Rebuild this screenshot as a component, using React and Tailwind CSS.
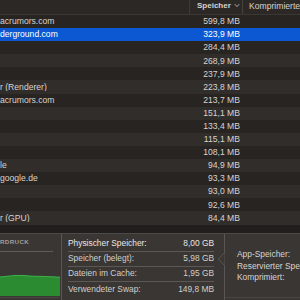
import React from "react";

const rows = [
  { name: "acrumors.com", mem: "599,8 MB" },
  { name: "derground.com", mem: "323,9 MB", selected: true },
  { name: "", mem: "284,4 MB" },
  { name: "", mem: "268,9 MB" },
  { name: "", mem: "237,9 MB" },
  { name: "r (Renderer)", mem: "223,8 MB" },
  { name: "acrumors.com", mem: "213,7 MB" },
  { name: "", mem: "151,1 MB" },
  { name: "", mem: "133,4 MB" },
  { name: "", mem: "115,1 MB" },
  { name: "", mem: "108,1 MB" },
  { name: "le", mem: "94,9 MB" },
  { name: "google.de", mem: "93,3 MB" },
  { name: "", mem: "93,0 MB" },
  { name: "", mem: "92,6 MB" },
  { name: "r (GPU)", mem: "84,4 MB" },
];

const stats = [
  { label: "Physischer Speicher:", value: "8,00 GB", bright: true },
  { label: "Speicher (belegt):", value: "5,98 GB" },
  { label: "Dateien im Cache:", value: "1,95 GB" },
  { label: "Verwendeter Swap:", value: "149,8 MB" },
];

const rowClass = (row, i) => {
  if (row.selected) return "bg-[#0b58d2] text-white";
  return i % 2 === 0 ? "bg-[#272422] text-[#d8d4d0]" : "bg-[#302d2b] text-[#d8d4d0]";
};

const App = () => {
  return (
    <div
      className="w-[300px] h-[300px] overflow-hidden bg-[#272422] flex flex-col"
      style={{ fontFamily: '"Liberation Sans", Arial, sans-serif' }}
    >
      {/* table header */}
      <div className="h-[15px] shrink-0 flex bg-[#2b2826] border-b border-[#3a3735] leading-none text-[#d8d4d0]">
        <div className="w-[190px] border-r border-[#3d3a38]" />
        <div className="w-[53px] flex items-start pt-[2px] pl-[7px] text-[8px] font-bold border-r border-[#45413e]">
          <span>Speicher</span>
          <svg width="6" height="5" viewBox="0 0 6 5" className="ml-[3px] mt-[1px]">
            <path d="M0.8 1.2 L3 3.6 L5.2 1.2" stroke="#bdb9b5" strokeWidth="0.9" fill="none" />
          </svg>
        </div>
        <div className="flex-1 pt-[2px] pl-[6px] text-[8.6px] whitespace-nowrap overflow-hidden">Komprimierte</div>
      </div>

      {/* rows */}
      {rows.map((row, i) => (
        <div
          key={i}
          className={`h-[13.1px] shrink-0 flex items-center text-[8.6px] leading-none ${rowClass(row, i)}`}
        >
          <div className="w-[190px] whitespace-nowrap overflow-hidden">{row.name}</div>
          <div className="w-[53px] text-right pr-[3px] whitespace-nowrap">{row.mem}</div>
          <div className="flex-1" />
        </div>
      ))}

      <div className="h-[8px] shrink-0 bg-[#211f1d]" />

      {/* bottom panel */}
      <div className="flex-1 flex bg-[#393634] border-t border-[#4d4946] text-[8.4px] leading-none">
        {/* memory pressure */}
        <div className="w-[62px] shrink-0 flex flex-col border-r border-[#5a5653]">
          <div className="pt-[5px] h-[17px] text-[6.2px] font-bold tracking-[0.4px] text-[#a39e99] whitespace-nowrap">
            RDRUCK
          </div>
          <div className="w-[53px] h-px bg-[#5f5b58]" />
          <div className="flex-1 mr-[2px] mb-[2px] border-b border-[#4a4643]">
            <svg width="60" height="45" viewBox="0 0 60 45" className="block">
              <path
                d="M0 25 L8 24.2 L16 23.4 L24 23.6 L32 24.2 L42 24.4 L52 24.8 L60 25.2 L60 44 L0 44 Z"
                fill="#2a8b31"
              />
              <path
                d="M0 25 L8 24.2 L16 23.4 L24 23.6 L32 24.2 L42 24.4 L52 24.8 L60 25.2"
                stroke="#3db44a"
                strokeWidth="1"
                fill="none"
              />
            </svg>
          </div>
        </div>

        {/* stats */}
        <div className="w-[163px] shrink-0 relative border-r border-[#5a5653] pl-[6px] pr-[10px] pt-[3px]">
          {stats.map((s, i) => (
            <div
              key={s.label}
              className={`h-[15px] flex items-center justify-between whitespace-nowrap ${
                i < stats.length - 1 ? "border-b border-[#5c5855]" : ""
              } ${s.bright ? "text-[#ebe7e3]" : "text-[#d3cfcb]"}`}
            >
              <span>{s.label}</span>
              <span>{s.value}</span>
            </div>
          ))}
          <svg width="8" height="14" viewBox="0 0 8 14" className="absolute right-[-1px] top-[18px]">
            <path d="M7.5 0 L7.5 0.5 L1.5 7 L7.5 13.5 L7.5 14" stroke="#5a5653" strokeWidth="1" fill="#393634" />
          </svg>
        </div>

        {/* app memory */}
        <div className="flex-1 flex flex-col pl-[12px] pt-[15px] pb-[2px] border-b border-[#4a4643] mb-[2px] text-[#d8d4d0] whitespace-nowrap overflow-hidden">
          <div className="h-[11.5px] flex items-center">App-Speicher:</div>
          <div className="h-[11.5px] flex items-center">Reservierter Speicher:</div>
          <div className="h-[11.5px] flex items-center">Komprimiert:</div>
        </div>
      </div>
    </div>
  );
};

export default App;
